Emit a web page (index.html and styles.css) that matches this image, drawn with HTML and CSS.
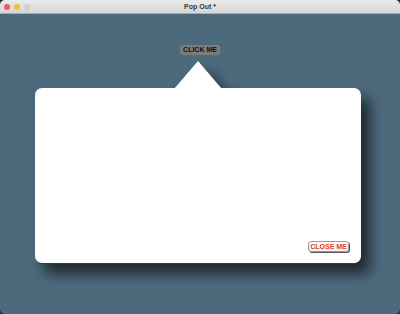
FILE: index.html
```html
<!DOCTYPE html>
<html>
<head>
<meta charset="utf-8">
<link rel="stylesheet" href="styles.css">
</head>
<body>
<div class="window">
  <div class="titlebar">
    <div class="lights">
      <span class="light red"></span>
      <span class="light yellow"></span>
      <span class="light gray"></span>
    </div>
    <div class="title">Pop Out *</div>
  </div>
  <div class="content">
    <button class="click-btn">CLICK ME</button>
    <div class="popover">
      <svg class="arrow" width="48" height="28" viewBox="0 0 48 28"><polygon points="0,28 24,0 48,28" fill="#ffffff"/></svg>
      <div class="box">
        <button class="close-btn">CLOSE ME</button>
      </div>
    </div>
  </div>
</div>
</body>
</html>
```
FILE: styles.css
```css
html, body {
  margin: 0;
  padding: 0;
  background: #2a2a2a;
}
.window {
  width: 400px;
  height: 314px;
  display: flex;
  flex-direction: column;
  border-radius: 5px;
  overflow: hidden;
  background: #4d6a7d;
  font-family: "Liberation Sans", Arial, sans-serif;
}
.titlebar {
  height: 14px;
  flex: none;
  box-sizing: border-box;
  background: linear-gradient(#ebebeb, #d6d6d6);
  border-bottom: 1px solid #a9a9a9;
  display: flex;
  align-items: center;
  position: relative;
}
.lights {
  display: flex;
  gap: 4px;
  padding-left: 4px;
}
.light {
  width: 6px;
  height: 6px;
  border-radius: 50%;
  display: block;
}
.red { background: #ec5f56; }
.yellow { background: #f4bd3a; }
.gray { background: #cfcfcf; }
.title {
  position: absolute;
  left: 0;
  right: 0;
  top: 0;
  bottom: 0;
  text-align: center;
  font-size: 7px;
  font-weight: bold;
  line-height: 13px;
  color: #3a3a3a;
}
.content {
  flex: 1;
  display: flex;
  flex-direction: column;
  padding-top: 31px;
}
.click-btn {
  align-self: flex-start;
  margin-left: 180px;
  width: 40px;
  height: 10px;
  padding: 0;
  border: none;
  border-radius: 3px;
  background: #7b7b7b;
  color: #111;
  font-family: "Liberation Sans", Arial, sans-serif;
  font-size: 7px;
  font-weight: bold;
  line-height: 10px;
}
.popover {
  margin-left: 35px;
  margin-top: 6px;
  width: 326px;
  display: flex;
  flex-direction: column;
  align-items: center;
  filter: drop-shadow(9px 10px 7px rgba(0, 0, 0, 0.62));
}
.arrow {
  display: block;
  margin-bottom: -1px;
}
.box {
  width: 326px;
  height: 176px;
  box-sizing: border-box;
  background: #ffffff;
  border-radius: 7px;
  border-bottom: 1px solid #3a3a3a;
  display: flex;
  justify-content: flex-end;
  align-items: flex-end;
  padding: 0 12px 11px 0;
}
.close-btn {
  width: 41px;
  height: 11px;
  padding: 0;
  box-sizing: border-box;
  background: linear-gradient(#ffffff, #f2f2f2);
  border: 1px solid #9a9a9a;
  border-radius: 3px;
  box-shadow: 1px 1px 0 #555;
  color: #e2391f;
  font-family: "Liberation Sans", Arial, sans-serif;
  font-size: 7px;
  font-weight: bold;
  line-height: 9px;
}
```
